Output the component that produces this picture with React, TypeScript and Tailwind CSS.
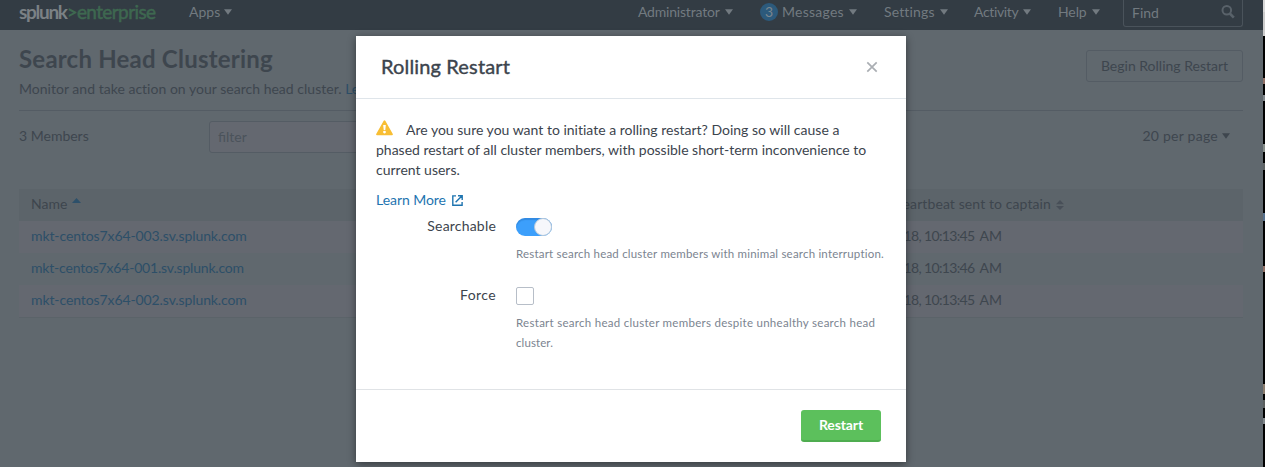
import React from "react";

const Caret = ({ className = "" }: { className?: string }) => (
  <svg className={"h-[6px] w-[8px] shrink-0 " + className} viewBox="0 0 8 6" fill="currentColor">
    <path d="M0 0.3h8L4 5.7z" />
  </svg>
);

const navItems = [
  { label: "Administrator", width: "w-[122px]", tracking: "tracking-[-0.2px]", badge: "" },
  { label: "Messages", width: "w-[124px]", tracking: "tracking-[0.25px]", badge: "3" },
  { label: "Settings", width: "w-[90px]", tracking: "tracking-[0.15px]", badge: "" },
  { label: "Activity", width: "w-[84px]", tracking: "tracking-[-0.35px]", badge: "" },
  { label: "Help", width: "w-[65px]", tracking: "tracking-[-0.1px]", badge: "" },
];

const rows = [
  { name: "mkt-centos7x64-003.sv.splunk.com", time: "5/24/2018, 10:13:45 AM", bg: "bg-[#646870]", tracking: "tracking-[-0.1px]" },
  { name: "mkt-centos7x64-001.sv.splunk.com", time: "5/24/2018, 10:13:46 AM", bg: "bg-[#60686e]", tracking: "tracking-[-0.19px]" },
  { name: "mkt-centos7x64-002.sv.splunk.com", time: "5/24/2018, 10:13:45 AM", bg: "bg-[#646870]", tracking: "tracking-[-0.1px]" },
];

function NavBar() {
  return (
    <nav className="flex h-[30px] shrink-0 items-start bg-[#333c44] pl-[19px] text-[14px] leading-[20px] text-[#727a80]">
      <div className="flex w-[170px] pt-[2px] text-[19px] leading-[20px]">
        <span className="font-bold tracking-[-1.3px] text-[#7b8185]">splunk</span>
        <span className="font-bold tracking-[-0.8px] text-[#3e6850]">&gt;</span>
        <span className="tracking-[-0.6px] text-[#3e6850] [-webkit-text-stroke:0.5px_#3e6850]">enterprise</span>
      </div>
      <div className="flex items-center pt-[2px]">
        <span className="tracking-[0px]">Apps</span>
        <Caret className="ml-[4px]" />
      </div>
      <div className="ml-auto flex pt-[2px]">
        {navItems.map((n) => (
          <div key={n.label} className={"flex items-center " + n.width}>
            {n.badge && (
              <span className="mr-[4px] flex size-[18px] items-center justify-center rounded-full bg-[#2c5a7c] text-[#7b868e]">
                {n.badge}
              </span>
            )}
            <span className={n.tracking}>{n.label}</span>
            <Caret className="ml-[5px]" />
          </div>
        ))}
      </div>
      <div className="mr-[20px] flex h-[27px] w-[120px] items-center justify-between rounded-b-[3px] border border-t-0 border-[#4a535b] pr-[7px] pl-[8px]">
        <span className="pb-px">Find</span>
        <svg className="mb-[2px] size-[14px]" viewBox="0 0 14 14" fill="none" stroke="#59626a" strokeWidth="2">
          <circle cx="5.8" cy="5.3" r="4.3" />
          <path d="M8.8 8.5l4 4.2" strokeWidth="2.6" />
        </svg>
      </div>
    </nav>
  );
}

function ClusterPage() {
  return (
    <main className="flex flex-1 flex-col bg-[#60686e] pr-[20px] pl-[19px] text-[14px] leading-[20px] text-[#3e464e]">
      <div className="flex h-[81px] justify-between border-b border-[#545c64]">
        <div className="flex flex-col pt-[14px]">
          <h1 className="text-[24px] leading-[30px] font-bold tracking-[0.22px]">Search Head Clustering</h1>
          <p className="mt-[5px] tracking-[0.02px]">
            Monitor and take action on your search head cluster. <span className="text-[#2d4f68]">Learn More</span>
          </p>
        </div>
        <div className="mt-[20px] flex h-[32px] w-[157px] items-center justify-center rounded-[3px] border border-[#545c64] pb-px tracking-[0px]">
          Begin Rolling Restart
        </div>
      </div>
      <div className="mt-[10px] flex h-[32px] items-center">
        <span className="w-[190px] pb-[2px] tracking-[0px]">3 Members</span>
        <div className="flex h-[32px] w-[230px] items-center rounded-[3px] border border-[#545c64] bg-[#646870] pb-px pl-[8px] text-[#4b535b]">filter</div>
        <div className="mr-[13px] ml-auto flex items-center pb-[2px]">
          <span className="tracking-[0.25px]">20 per page</span>
          <Caret className="ml-[4px]" />
        </div>
      </div>
      <div className="mt-[36px] flex h-[32px] items-center bg-[#5c646a] pb-[2px] pl-[12px]">
        <span>Name</span>
        <svg className="mb-[7px] ml-[5px] h-[5px] w-[9px]" viewBox="0 0 9 5" fill="#2d506a">
          <path d="M0 5h9L4.5 0z" />
        </svg>
        <div className="mr-[179px] ml-auto flex items-center">
          <span className="tracking-[0.1px]">Last heartbeat sent to captain</span>
          <svg className="mt-px ml-[5px] h-[10px] w-[8px]" viewBox="0 0 8 10" fill="#484f58">
            <path d="M0 4.3h8L4 0zM0 5.9h8L4 10z" />
          </svg>
        </div>
      </div>
      {rows.map((r) => (
        <div key={r.name} className={"flex h-[32px] items-center justify-between pr-[241px] pb-[2px] pl-[12px] " + r.bg}>
          <span className={"text-[#2d4f68] " + r.tracking}>{r.name}</span>
          <span className="flex gap-[5px]">
            <span className="tracking-[-0.65px]">{r.time.slice(0, -3)}</span>
            <span>{r.time.slice(-2)}</span>
          </span>
        </div>
      ))}
      <div className="h-px bg-[#5b6369]" />
    </main>
  );
}

function RestartDialog() {
  return (
    <section className="absolute top-[36px] left-[356px] flex h-[426px] w-[550px] flex-col bg-white text-[14px] leading-[20px] text-[#3c444d] shadow-[0_2px_8px_rgba(0,0,0,0.45)]">
      <header className="flex h-[63px] items-center justify-between border-b border-[#dfe5ea] pr-[28px] pl-[25px]">
        <h2 className="pb-[2px] text-[20px] leading-[24px] tracking-[0.15px] [-webkit-text-stroke:0.4px_#3c444d]">Rolling Restart</h2>
        <svg className="size-[12px]" viewBox="0 0 12 12" stroke="#aaaeb3" strokeWidth="1.7">
          <path d="M1.3 1.3l9.4 9.4M10.7 1.3l-9.4 9.4" />
        </svg>
      </header>
      <div className="flex flex-1 flex-col pt-[21px] pl-[20px]">
        <div className="flex items-start">
          <svg className="h-[16px] w-[17px]" viewBox="0 0 17 16">
            <path d="M8.5 0.2Q9 0.2 9.3 0.8L16.8 14.1Q17.1 15.2 16 15.2H1Q-0.1 15.2 0.2 14.1L7.7 0.8Q8 0.2 8.5 0.2z" fill="#f8be34" />
            <path d="M7.2 5h2.6l-.5 5H7.7z" fill="#fff" />
            <circle cx="8.5" cy="12.1" r="1.4" fill="#fff" />
          </svg>
          <span className="ml-[13px] tracking-[0.005px]">Are you sure you want to initiate a rolling restart? Doing so will cause a</span>
        </div>
        <span className="tracking-[-0.01px]">phased restart of all cluster members, with possible short-term inconvenience to</span>
        <span className="tracking-[0px]">current users.</span>
        <a className="mt-[10px] flex items-center text-[#1e74b0]">
          <span className="tracking-[-0.05px]">Learn More</span>
          <svg className="ml-[6px] size-[11px]" viewBox="0 0 11 11" fill="none" stroke="currentColor" strokeWidth="1.4">
            <path d="M4 .9H.8v9.3h9.3V7M3.6 7.3L9.6 1.2M6 .8h4.2V5" />
          </svg>
        </a>
        <div className="mt-[6px] flex h-[69px]">
          <span className="w-[120px] text-right tracking-[0.2px]">Searchable</span>
          <div className="ml-[20px] flex flex-col pt-[2px]">
            <div className="flex h-[18px] w-[36px] justify-end rounded-full bg-[#3c9ffb] shadow-[inset_0_2px_1px_rgba(30,100,180,0.35)]">
              <span className="size-[18px] rounded-full border border-[#b5c9dc] bg-[#f6f7fb]" />
            </div>
            <span className="mt-[8px] text-[11.5px] tracking-[0.2px] text-[#7b8490]">Restart search head cluster members with minimal search interruption.</span>
          </div>
        </div>
        <div className="flex">
          <span className="w-[120px] text-right tracking-[0.4px]">Force</span>
          <div className="ml-[20px] flex flex-col pt-[2px] text-[11.5px] text-[#7b8490]">
            <div className="size-[18px] rounded-[2px] border border-[#b7bec8]" />
            <span className="mt-[8px] tracking-[0.28px]">Restart search head cluster members despite unhealthy search head</span>
            <span className="tracking-[0.1px]">cluster.</span>
          </div>
        </div>
      </div>
      <footer className="flex h-[73px] justify-end border-t border-[#e0e3e6] pt-[20px] pr-[25px]">
        <button className="h-[32px] w-[80px] rounded-[3px] border-b-2 border-[#4fad50] bg-[#5cc05c] font-bold tracking-[-0.1px] text-white">Restart</button>
      </footer>
    </section>
  );
}

function BackgroundEdge() {
  return (
    <div className="flex w-[2px] flex-col bg-black">
      <div className="h-[12px] bg-[#d8d8d8]" />
      <div className="h-[24px] bg-[#cccccc]" />
      <div className="mt-[42px] h-[6px] bg-[#907066]" />
      <div className="mt-[11px] h-[6px] bg-[#80868a]" />
      <div className="mt-[43px] h-[8px] bg-[#858c88]" />
      <div className="mt-[11px] h-[7px] bg-[#5d6262]" />
      <div className="mt-[43px] h-[8px] bg-[#56708c]" />
      <div className="mt-[45px] h-[6px] bg-[#907066]" />
      <div className="mt-[112px] h-[10px] bg-[#8a7c6e]" />
      <div className="mt-[6px] h-[8px] bg-[#5a5e5e]" />
      <div className="mt-[10px] h-[6px] bg-[#80868a]" />
    </div>
  );
}

export default function App() {
  return (
    <div className="relative flex h-[467px] w-[1265px] overflow-hidden font-['Lato',sans-serif]">
      <div className="flex w-[1263px] flex-col">
        <NavBar />
        <ClusterPage />
      </div>
      <BackgroundEdge />
      <RestartDialog />
    </div>
  );
}
